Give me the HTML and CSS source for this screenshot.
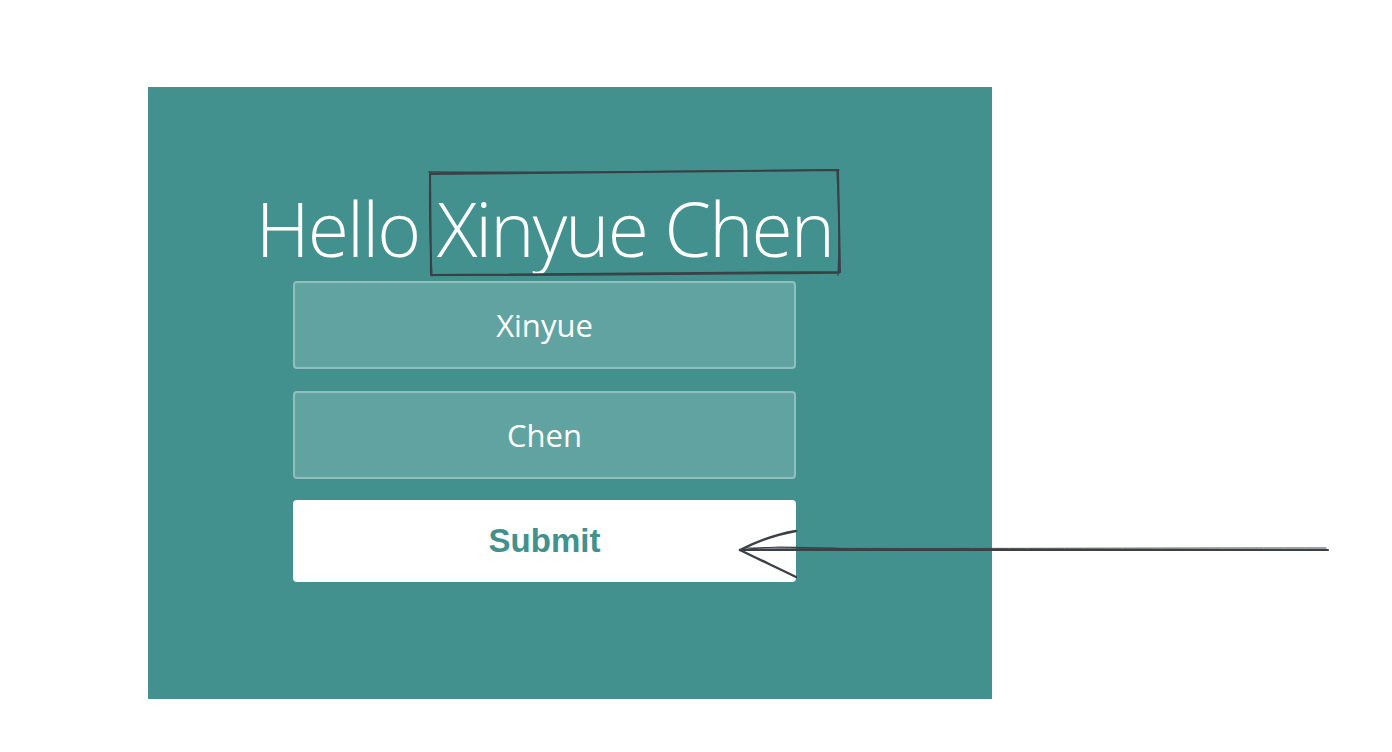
FILE: index.html
```html
<!DOCTYPE html>
<html>
<head>
<meta charset="utf-8">
<link rel="stylesheet" href="styles.css">
</head>
<body>
<div class="stage">
  <section class="panel">
    <div class="form">
      <h1 class="greeting">Hello Xinyue Chen</h1>
      <div class="field">Xinyue</div>
      <div class="field">Chen</div>
      <button class="submit">Submit</button>
    </div>
  </section>
  <svg class="sketch" width="1392" height="752" viewBox="0 0 1392 752">
    <g fill="none" stroke="#3b4046" stroke-linecap="round" stroke-linejoin="round">
      <path d="M430 174 L838 170 L840 272 L431 275 Z" stroke-width="2"/>
      <path d="M429 172 C560 173 700 171 839 170 M837 171 C839 205 840 240 838 275 M839 273 C700 274 560 276 431 275 M432 276 C430 240 429 205 430 173" stroke-width="1.4"/>
      <path d="M1328 550 L740 550" stroke-width="2.2"/>
      <path d="M1326 548 C1100 548 900 549 745 548" stroke-width="1"/>
      <path d="M740 550 C760 540 778 534 796 531" stroke-width="2.4"/>
      <path d="M740 550 C760 560 778 568 796 577" stroke-width="2.4"/>
      <path d="M742 550 C770 545 800 548 860 549" stroke-width="1.2"/>
    </g>
  </svg>
</div>
</body>
</html>
```

FILE: styles.css
```css
* { box-sizing: border-box; }
html, body { margin: 0; padding: 0; background: #ffffff; }
body { width: 1392px; height: 752px; overflow: hidden; font-family: "Open Sans", "Liberation Sans", sans-serif; }
.stage { position: relative; width: 1392px; height: 752px; padding: 87px 0 0 148px; }
.panel {
  width: 844px;
  height: 612px;
  background: #42918e;
  padding: 88px 0 0 145px;
}
.form { width: 503px; display: flex; flex-direction: column; align-items: center; }
.greeting {
  margin: 0;
  font-weight: 300;
  font-size: 75px;
  line-height: 106px;
  color: #ffffff;
  white-space: nowrap;
  letter-spacing: -1.9px;
}
.field {
  width: 503px;
  height: 88px;
  margin-bottom: 22px;
  background: rgba(255, 255, 255, 0.17);
  border: 2px solid rgba(255, 255, 255, 0.3);
  border-radius: 4px;
  color: #ffffff;
  font-size: 31px;
  display: flex;
  align-items: center;
  justify-content: center;
}
.submit {
  width: 503px;
  height: 82px;
  margin-top: -1px;
  background: #ffffff;
  border: none;
  border-radius: 4px;
  color: #42918e;
  font-family: "Liberation Sans", Arial, sans-serif;
  font-weight: bold;
  font-size: 33px;
  padding: 0;
}
.sketch { position: absolute; left: 0; top: 0; pointer-events: none; }
```
